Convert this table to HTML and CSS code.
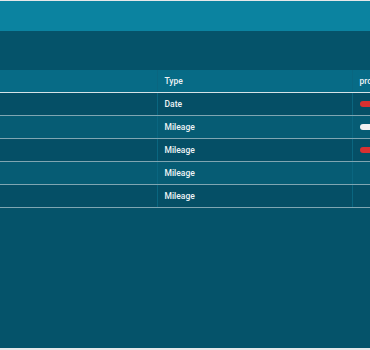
FILE: index.html
```html
<!DOCTYPE html>
<html lang="en">
  <head>
    <meta charset="UTF-8" />
    <meta name="viewport" content="width=device-width, initial-scale=1.0" />
    <title>Maintenance</title>
    <link rel="stylesheet" href="styles.css">
  </head>
  <body>
    <div class="app">
      <div class="topbar"></div>
      <div class="toolbar"></div>
      <div class="table-wrap">
        <table class="grid">
          <thead>
            <tr>
              <th class="col-name"></th>
              <th class="col-type">Type</th>
              <th class="col-progress">progress</th>
            </tr>
          </thead>
          <tbody>
            <tr>
              <td></td>
              <td>Date</td>
              <td><span class="pill red"></span></td>
            </tr>
            <tr>
              <td></td>
              <td>Mileage</td>
              <td><span class="pill white"></span></td>
            </tr>
            <tr>
              <td></td>
              <td>Mileage</td>
              <td><span class="pill red"></span></td>
            </tr>
            <tr>
              <td></td>
              <td>Mileage</td>
              <td></td>
            </tr>
            <tr>
              <td></td>
              <td>Mileage</td>
              <td></td>
            </tr>
          </tbody>
        </table>
      </div>
    </div>
  </body>
</html>
```

FILE: styles.css
```css
body {
  margin: 0;
  padding: 0;
  background: #e6e8e9;
  font-family: Roboto, "Liberation Sans", sans-serif;
  overflow: hidden;
}
.app {
  margin-top: 1px;
  height: 347px;
  background: #05536a;
  display: flex;
  flex-direction: column;
  overflow: hidden;
}
.topbar {
  height: 30px;
  background: #0b83a0;
  flex-shrink: 0;
}
.toolbar {
  height: 39px;
  flex-shrink: 0;
}
.table-wrap {
  width: 370px;
  overflow: hidden;
}
.grid {
  border-collapse: collapse;
  table-layout: fixed;
  width: 420px;
  color: #eef4f6;
  font-size: 8.5px;
}
.col-name {
  width: 157px;
}
.col-type {
  width: 195px;
}
.col-progress {
  width: 68px;
}
.grid th,
.grid td {
  box-sizing: border-box;
  height: 23px;
  padding: 0 0 0 7px;
  text-align: left;
  border-right: 1px solid #0a6680;
  border-bottom: 1px solid #7fa6b2;
  white-space: nowrap;
  overflow: hidden;
  font-weight: 500;
}
.grid th {
  height: 22px;
  background: #076b86;
  border-bottom-color: #d6e3e7;
}
.grid tbody tr:nth-child(odd) td {
  background: #054f66;
}
.grid tbody tr:nth-child(even) td {
  background: #065c74;
}
.pill {
  display: block;
  width: 40px;
  height: 6px;
  border-radius: 3px;
}
.pill.red {
  background: #d93030;
}
.pill.white {
  background: #f2f2f2;
}
```
